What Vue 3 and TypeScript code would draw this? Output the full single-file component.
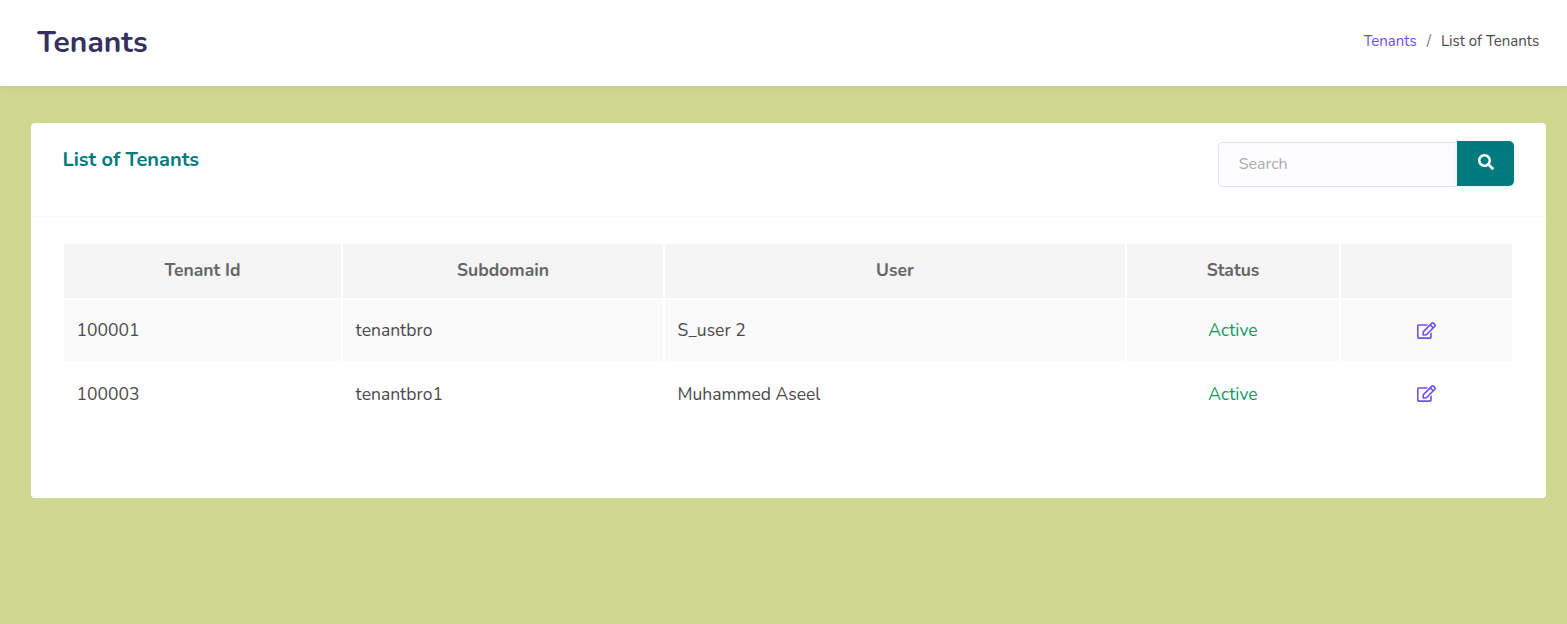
<script setup lang="ts">
import { ref } from 'vue'

interface Tenant {
  id: string
  subdomain: string
  user: string
  status: string
}

const query = ref('')

const columns: string[] = ['Tenant Id', 'Subdomain', 'User', 'Status', '']

const tenants: Tenant[] = [
  { id: '100001', subdomain: 'tenantbro', user: 'S_user 2', status: 'Active' },
  { id: '100003', subdomain: 'tenantbro1', user: 'Muhammed Aseel', status: 'Active' },
]
</script>

<template>
  <div class="page">
    <header class="topbar">
      <h1 class="title">Tenants</h1>
      <nav class="crumbs">
        <a class="crumb-link">Tenants</a>
        <span class="crumb-sep">/</span>
        <span class="crumb-current">List of Tenants</span>
      </nav>
    </header>

    <main class="card">
      <div class="card-head">
        <h2 class="card-title">List of Tenants</h2>
        <form class="search" @submit.prevent>
          <input v-model="query" class="search-input" type="text" placeholder="Search" />
          <button class="search-btn" type="submit" aria-label="Search">
            <svg class="search-icon" viewBox="0 0 512 512">
              <path
                d="M505 442.7L405.3 343c-4.5-4.5-10.6-7-17-7H372c27.6-35.3 44-79.7 44-128C416 93.1 322.9 0 208 0S0 93.1 0 208s93.1 208 208 208c48.3 0 92.7-16.4 128-44v16.3c0 6.4 2.5 12.5 7 17l99.7 99.7c9.4 9.4 24.6 9.4 33.9 0l28.3-28.3c9.4-9.4 9.4-24.6.1-34zM208 336c-70.7 0-128-57.2-128-128 0-70.7 57.2-128 128-128 70.7 0 128 57.2 128 128 0 70.7-57.2 128-128 128z"
              />
            </svg>
          </button>
        </form>
      </div>

      <div class="grid">
        <div class="row head">
          <div v-for="column in columns" :key="column" class="cell">{{ column }}</div>
        </div>
        <div v-for="tenant in tenants" :key="tenant.id" class="row body">
          <div class="cell">{{ tenant.id }}</div>
          <div class="cell">{{ tenant.subdomain }}</div>
          <div class="cell">{{ tenant.user }}</div>
          <div class="cell status">{{ tenant.status }}</div>
          <div class="cell action">
            <svg class="edit-icon" viewBox="0 0 576 512">
              <path
                d="M402.3 344.9l32-32c5-5 13.7-1.5 13.7 5.7V464c0 26.5-21.5 48-48 48H48c-26.5 0-48-21.5-48-48V112c0-26.5 21.5-48 48-48h273.5c7.1 0 10.7 8.6 5.7 13.7l-32 32c-1.5 1.5-3.5 2.3-5.7 2.3H48v352h352V350.5c0-2.1.8-4.1 2.3-5.6zm156.6-201.8L296.3 405.7l-90.4 10c-26.2 2.9-48.5-19.2-45.6-45.6l10-90.4L432.9 17.1c22.9-22.9 59.9-22.9 82.7 0l43.2 43.2c22.9 22.9 22.9 60 .1 82.8zM460.1 174L402 115.9 216.2 301.8l-7.3 65.3 65.3-7.3L460.1 174zm64.8-79.7l-43.2-43.2c-4.1-4.1-10.8-4.1-14.8 0L436 82l58.1 58.1 30.9-30.9c4-4.2 4-10.8-.1-14.9z"
              />
            </svg>
          </div>
        </div>
      </div>
    </main>
  </div>
</template>

<style>
body {
  margin: 0;
  background: #ced891;
}
</style>

<style scoped>
.page {
  min-height: 624px;
  background: #ced891;
  font-family: Nunito, Lato, 'Noto Sans', sans-serif;
  color: #4a4a4a;
}
.topbar {
  box-sizing: border-box;
  height: 86px;
  padding: 0 27.7px 4px 37.3px;
  display: flex;
  align-items: center;
  justify-content: space-between;
  background: #fff;
  box-shadow: 0 4px 10px rgba(0, 0, 0, 0.04);
}
.title {
  margin: 4px 0 0;
  font-size: 30px;
  line-height: 40px;
  font-weight: 700;
  color: #34305f;
}
.crumbs {
  display: flex;
  font-size: 15px;
  line-height: 20px;
}
.crumb-link {
  color: #6f4ef2;
}
.crumb-sep {
  margin: 0 10px;
  color: #6c757d;
}
.card {
  box-sizing: border-box;
  width: 1515px;
  height: 375px;
  margin: 37px 0 0 31px;
  background: #fff;
  border-radius: 4px;
}
.card-head {
  box-sizing: border-box;
  height: 94px;
  padding: 18px 32px 0 31.4px;
  display: flex;
  justify-content: space-between;
  align-items: flex-start;
  border-bottom: 1px solid #f9f9f9;
}
.card-title {
  margin: 5px 0 0;
  font-size: 20px;
  line-height: 28px;
  font-weight: 700;
  color: #007b7d;
}
.search {
  display: flex;
}
.search-input {
  box-sizing: border-box;
  width: 239px;
  height: 45px;
  margin: 1px 0 0;
  padding: 0 20px 1px 19.7px;
  border: 1px solid #e4e0fa;
  border-right-width: 0;
  border-radius: 5px 0 0 5px;
  background: #fdfdff;
  font-family: inherit;
  font-size: 16px;
  color: #4a4a4a;
  outline: none;
}
.search-input::placeholder {
  color: #acacac;
  opacity: 1;
}
.search-btn {
  display: flex;
  justify-content: center;
  width: 57px;
  height: 45px;
  padding: 13px 0 0;
  border: 0;
  border-radius: 0 5px 5px 0;
  background: #007b7d;
  box-shadow: 0 2px 6px rgba(0, 123, 125, 0.1);
}
.search-icon {
  width: 16px;
  height: 16px;
  fill: #fff;
}
.grid {
  display: grid;
  row-gap: 2px;
  margin: 27px 34px 0 33px;
}
.row {
  display: grid;
  grid-template-columns: 277px 320px 460px 212px 171px;
  column-gap: 2px;
}
.cell {
  display: flex;
  align-items: center;
  font-size: 17.5px;
}
.head .cell {
  height: 54px;
  padding-bottom: 2px;
  box-sizing: border-box;
  justify-content: center;
  background: #f5f5f5;
  font-weight: 700;
  color: #666;
}
.body .cell {
  box-sizing: border-box;
  height: 61px;
  padding: 0 12.6px 1px;
}
.body:nth-child(2) .cell {
  background: #fafafa;
}
.body:nth-child(3) .cell {
  height: 63px;
}
.body .status {
  justify-content: center;
  color: #0f9960;
}
.body .action {
  justify-content: center;
  padding-bottom: 1px;
}
.body:nth-child(3) .action {
  padding-bottom: 3px;
}
.edit-icon {
  width: 19px;
  height: 17px;
  fill: #6f4ef2;
}
</style>
